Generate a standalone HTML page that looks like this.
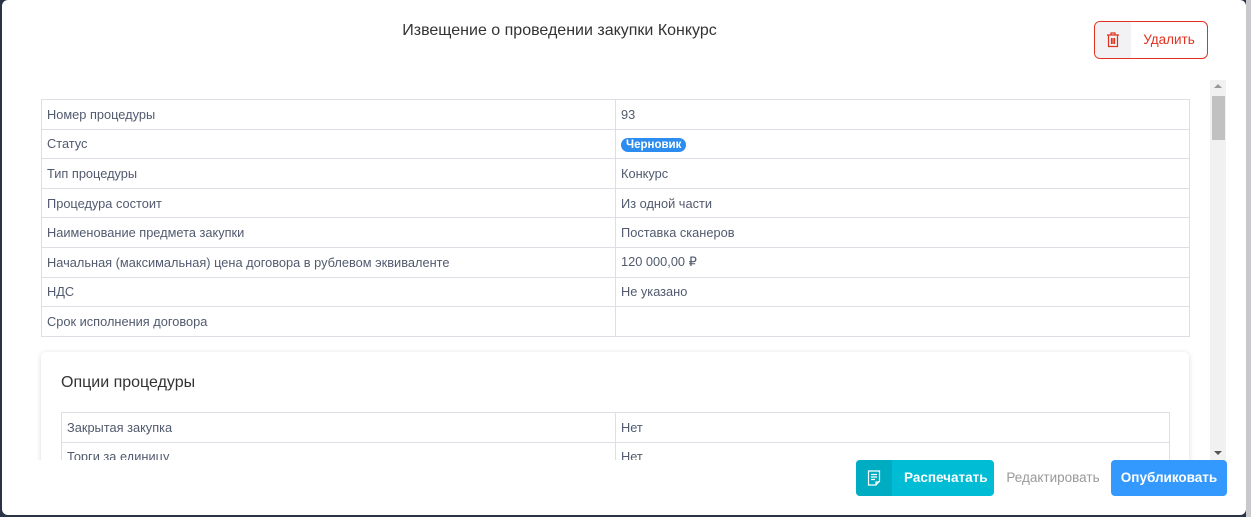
<!DOCTYPE html>
<html><head><meta charset="utf-8"><style>
*{box-sizing:border-box;margin:0;padding:0}
body{width:1251px;height:517px;background:#2b3444;font-family:"Liberation Sans",sans-serif;position:relative;overflow:hidden;color:#515a6e}
.bgr{position:absolute;left:1246px;top:0;width:5px;height:517px;background:#c8c9cc}
.modal{position:absolute;left:2px;top:0;width:1244px;height:515px;background:#fff;border-radius:6px;overflow:hidden}
.title{position:absolute;left:0;top:22px;width:1115px;text-align:center;font-size:16px;color:#333}
.del{position:absolute;left:1092px;top:21px;width:114px;height:38px;border:1px solid #e0321e;border-radius:6px;overflow:hidden;display:flex}
.del .ic{width:36px;background:#f2f2f4;display:flex;align-items:center;justify-content:center}
.del .t{flex:1;text-align:center;line-height:36px;color:#e0321e;font-size:13.5px}
.scroll{position:absolute;left:0;top:80px;width:1224px;height:380px;overflow:hidden}
table{border-collapse:collapse;font-size:12.8px;position:absolute}
td{border:1px solid #dcdfe3;height:29.6px;padding:0 5px;vertical-align:middle}
.sb{position:absolute;left:1208px;top:80px;width:16px;height:380px;background:#f1f1f1}
.thumb{position:absolute;left:1210px;top:96px;width:13px;height:44px;background:#c1c1c1}
.badge{background:#2d8cf0;color:#fff;font-weight:bold;font-size:11.5px;border-radius:8px;padding:1px 5px}
.card{position:absolute;left:39px;top:272px;width:1148px;height:200px;background:#fff;border-radius:5px;box-shadow:0 1px 6px rgba(0,0,0,.15)}
.card h3{position:absolute;left:20px;top:22px;font-weight:normal;font-size:16px;color:#333}
.btn{position:absolute;top:460px;height:36px;border-radius:4px;font-size:13.5px;line-height:36px;text-align:center}
</style></head><body>
<div class="bgr"></div>
<div class="modal">
<div class="title">Извещение о проведении закупки Конкурс</div>
<div class="del"><div class="ic"><svg width="14" height="16" viewBox="0 0 14 16" fill="none" stroke="#e0321e" stroke-width="1.2"><path d="M5 2.5V1h4v1.5M1 3h12M2.5 3v11.5h9V3M5.5 6v6M7 6v6M8.5 6v6"/></svg></div><div class="t">Удалить</div></div>
<div class="scroll">
<table style="left:39px;top:19px;width:1149px">
<tr><td style="width:574px">Номер процедуры</td><td>93</td></tr>
<tr><td>Статус</td><td><span class="badge">Черновик</span></td></tr>
<tr><td>Тип процедуры</td><td>Конкурс</td></tr>
<tr><td>Процедура состоит</td><td>Из одной части</td></tr>
<tr><td>Наименование предмета закупки</td><td>Поставка сканеров</td></tr>
<tr><td>Начальная (максимальная) цена договора в рублевом эквиваленте</td><td>120 000,00 ₽</td></tr>
<tr><td>НДС</td><td>Не указано</td></tr>
<tr><td>Срок исполнения договора</td><td></td></tr>
</table>
<div class="card"><h3>Опции процедуры</h3>
<table style="left:20px;top:60px;width:1109px">
<tr><td style="width:554px">Закрытая закупка</td><td>Нет</td></tr>
<tr><td>Торги за единицу</td><td>Нет</td></tr>
</table></div>
</div>
<div class="sb"><div style="position:absolute;left:4px;top:4px;border:4px solid transparent;border-bottom:4px solid #999;border-top:0"></div><div style="position:absolute;left:4px;bottom:5px;border:4px solid transparent;border-top:4px solid #555;border-bottom:0"></div></div>
<div class="thumb"></div>
<div class="btn" style="left:854px;width:138px;background:#00bcd4;color:#fff;overflow:hidden;font-weight:bold"><div style="position:absolute;left:0;top:0;width:36px;height:36px;background:#00acc1;display:flex;align-items:center;justify-content:center"><svg width="14" height="16" viewBox="0 0 14 16" fill="none" stroke="#fff" stroke-width="1.2"><path d="M1.5 1h11v10l-3.5 4h-7.5zM4 4.5h6M4 7h6M4 9.5h4M9 15v-3h3.5"/></svg></div><span style="position:absolute;left:48px">Распечатать</span></div>
<div class="btn" style="left:995px;width:112px;color:#999">Редактировать</div>
<div class="btn" style="left:1109px;width:116px;background:#3399ff;color:#fff;font-weight:bold">Опубликовать</div>
</div>
</body></html>
